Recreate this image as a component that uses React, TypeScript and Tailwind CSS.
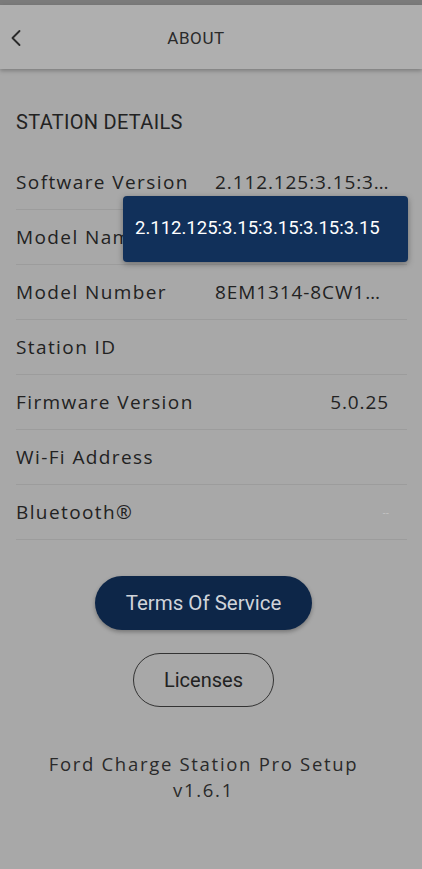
import { ChevronLeft } from "lucide-react";

const rows: { label: string; value: string; right?: boolean }[] = [
  { label: "Software Version", value: "2.112.125:3.15:3.15:3.15:3.15" },
  { label: "Model Name", value: "" },
  { label: "Model Number", value: "8EM1314-8CW1SA-0001" },
  { label: "Station ID", value: "" },
  { label: "Firmware Version", value: "5.0.25", right: true },
  { label: "Wi-Fi Address", value: "" },
  { label: "Bluetooth®", value: "--", right: true },
];

export default function App() {
  return (
    <div className="relative min-h-[869px] w-[422px] bg-[#a8a8a8] text-[#222]" style={{ fontFamily: "'Open Sans', sans-serif" }}>
      <div className="h-[5px] bg-[#7b7b7b]" />
      <header className="relative flex h-[64px] items-center justify-center bg-[#afafaf] pr-[30px] pt-[4px] shadow-[0_2px_4px_rgba(0,0,0,0.25)]">
        <ChevronLeft className="absolute left-[2px] top-[19px] h-[28px] w-[28px] text-[#2a2a2a]" strokeWidth={1.6} />
        <h1 className="text-[17px] tracking-[0.6px] text-[#2a2a2a]" style={{ fontFamily: "Roboto, sans-serif" }}>
          ABOUT
        </h1>
      </header>

      <main className="pl-4 pr-[15px]">
        <h2 className="mt-[38px] text-[20px] tracking-[0.3px] text-[#222]" style={{ fontFamily: "Roboto, sans-serif" }}>
          STATION DETAILS
        </h2>

        <div className="mt-[18px]">
          {rows.map((r) => (
            <div key={r.label} className="flex h-[55px] items-center border-b border-[#9c9c9c]">
              <span className="w-[199px] shrink-0 text-[19px] tracking-[1.4px]">{r.label}</span>
              <span
                className={`w-[174px] truncate ${r.right ? "text-right" : ""} ${
                  r.value === "--" ? "text-[10px] text-[#c4c4c4]" : "text-[19px] tracking-[0.9px]"
                }`}
              >
                {r.value}
              </span>
            </div>
          ))}
        </div>
      </main>

      <div className="pl-4 pr-[31px]">
        <div className="mt-[36px] flex flex-col items-center" style={{ fontFamily: "Roboto, sans-serif" }}>
          <button className="flex h-[54px] w-[217px] items-center justify-center rounded-full bg-[#0d2648] text-[20.5px] text-[#d0d4da] shadow-[0_2px_4px_rgba(0,0,0,0.3)]">
            Terms Of Service
          </button>
          <button className="mt-[23px] flex h-[54px] w-[141px] items-center justify-center rounded-full border border-[#333] text-[20px] text-[#222]">
            Licenses
          </button>
        </div>

        <p className="mt-[44px] text-center text-[18.5px] leading-[26px] tracking-[1.7px] text-[#2a2a2a]">
          Ford Charge Station Pro Setup
          <br />
          v1.6.1
        </p>
      </div>

      <div
        className="absolute left-[123px] top-[196px] flex h-[66px] w-[285px] items-center rounded-[4px] bg-[#11305a] pl-[12px] text-[18.5px] text-white shadow-[0_2px_6px_rgba(0,0,0,0.35)]"
        style={{ fontFamily: "Roboto, sans-serif" }}
      >
        2.112.125:3.15:3.15:3.15:3.15
      </div>
    </div>
  );
}
